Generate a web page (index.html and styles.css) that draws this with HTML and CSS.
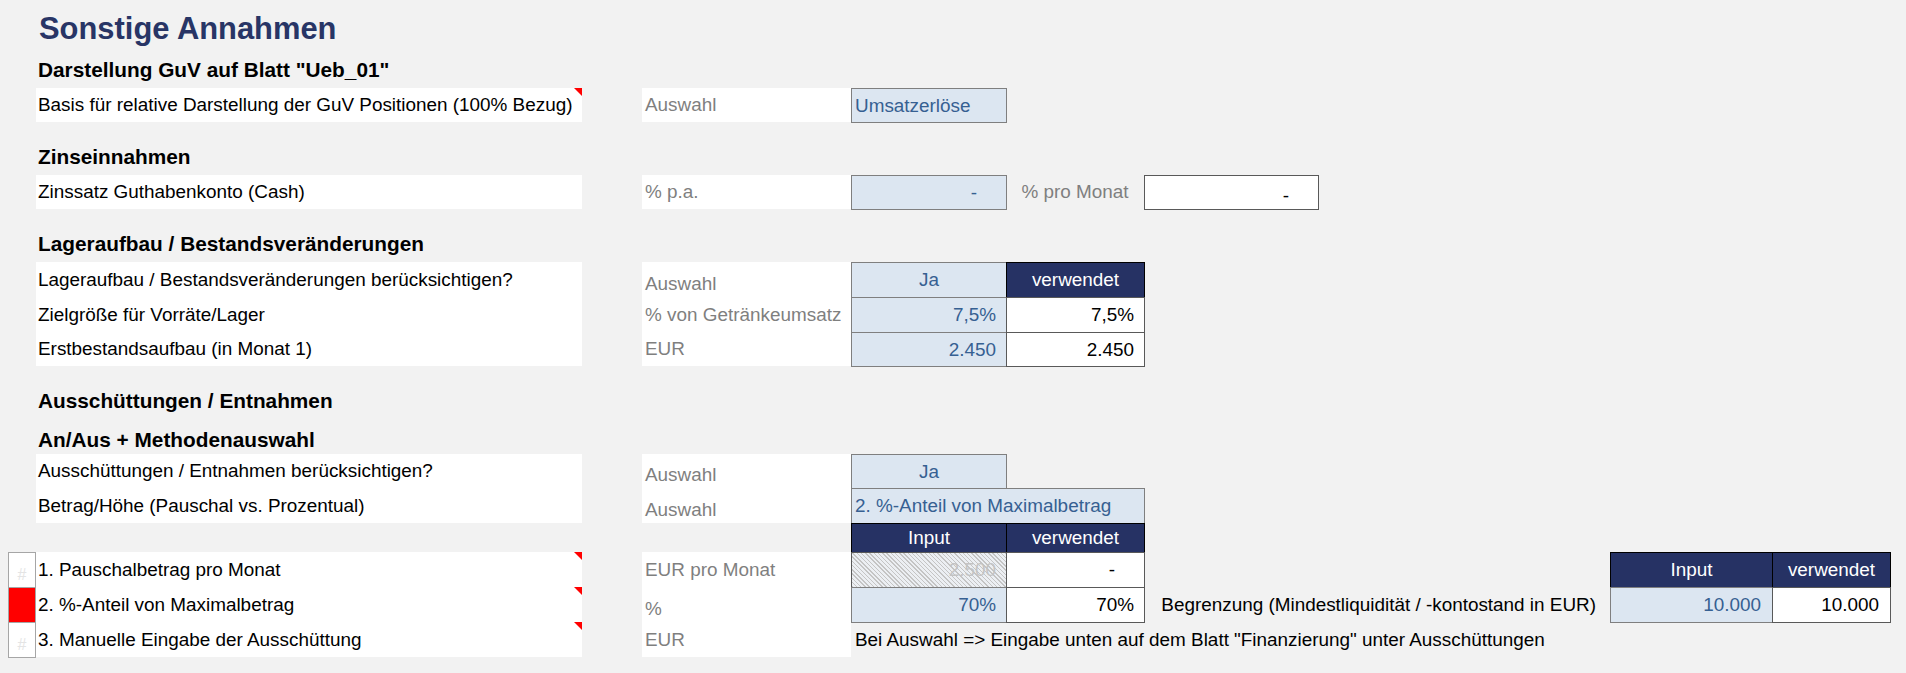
FILE: index.html
```html
<!DOCTYPE html>
<html lang="de">
<head>
<meta charset="utf-8">
<title>Sonstige Annahmen</title>
<link rel="stylesheet" href="styles.css">
</head>
<body>
<div class="sheet">
  <div class="row h53"><div class="sp-a"></div><div class="cell title">Sonstige Annahmen</div></div>
  <div class="row"><div class="sp-a"></div><div class="cell head">Darstellung GuV auf Blatt "Ueb_01"</div></div>
  <div class="row h34">
    <div class="sp-a"></div>
    <div class="cell c-b lbl note">Basis für relative Darstellung der GuV Positionen (100% Bezug)</div>
    <div class="c-c"></div>
    <div class="cell c-d unit">Auswahl</div>
    <div class="cell c-e bx inp">Umsatzerlöse</div>
  </div>
  <div class="row h18"></div>
  <div class="row"><div class="sp-a"></div><div class="cell head">Zinseinnahmen</div></div>
  <div class="row h34">
    <div class="sp-a"></div>
    <div class="cell c-b lbl">Zinssatz Guthabenkonto (Cash)</div>
    <div class="c-c"></div>
    <div class="cell c-d unit">% p.a.</div>
    <div class="cell c-e bx inp dash">-</div>
    <div class="cell c-f ctr muted">% pro Monat</div>
    <div class="cell c-g bx out dash bot">-</div>
  </div>
  <div class="row h18"></div>
  <div class="row"><div class="sp-a"></div><div class="cell head">Lageraufbau / Bestandsveränderungen</div></div>
  <div class="row">
    <div class="sp-a"></div>
    <div class="cell c-b lbl">Lageraufbau / Bestandsveränderungen berücksichtigen?</div>
    <div class="c-c"></div>
    <div class="cell c-d unit bot">Auswahl</div>
    <div class="cell c-e bx inp ctr">Ja</div>
    <div class="cell c-f bx hdr">verwendet</div>
  </div>
  <div class="row">
    <div class="sp-a"></div>
    <div class="cell c-b lbl">Zielgröße für Vorräte/Lager</div>
    <div class="c-c"></div>
    <div class="cell c-d unit">% von Getränkeumsatz</div>
    <div class="cell c-e bx inp num">7,5%</div>
    <div class="cell c-f bx out num">7,5%</div>
  </div>
  <div class="row h34">
    <div class="sp-a"></div>
    <div class="cell c-b lbl">Erstbestandsaufbau (in Monat 1)</div>
    <div class="c-c"></div>
    <div class="cell c-d unit">EUR</div>
    <div class="cell c-e bx inp num">2.450</div>
    <div class="cell c-f bx out num">2.450</div>
  </div>
  <div class="row h18"></div>
  <div class="row"><div class="sp-a"></div><div class="cell head">Ausschüttungen / Entnahmen</div></div>
  <div class="row"><div class="sp-a"></div><div class="cell head tight">An/Aus + Methodenauswahl</div></div>
  <div class="row h34">
    <div class="sp-a"></div>
    <div class="cell c-b lbl">Ausschüttungen / Entnahmen berücksichtigen?</div>
    <div class="c-c"></div>
    <div class="cell c-d unit bot">Auswahl</div>
    <div class="cell c-e bx inp ctr">Ja</div>
  </div>
  <div class="row">
    <div class="sp-a"></div>
    <div class="cell c-b lbl">Betrag/Höhe (Pauschal vs. Prozentual)</div>
    <div class="c-c"></div>
    <div class="cell c-d unit bot">Auswahl</div>
    <div class="cell c-ef bx inp">2. %-Anteil von Maximalbetrag</div>
  </div>
  <div class="row h29">
    <div class="sp-lead"></div>
    <div class="cell c-e bx hdr">Input</div>
    <div class="cell c-f bx hdr">verwendet</div>
  </div>
  <div class="row">
    <div class="sp-m"></div>
    <div class="cell chk">#</div>
    <div class="cell c-b lbl note">1. Pauschalbetrag pro Monat</div>
    <div class="c-c"></div>
    <div class="cell c-d unit">EUR pro Monat</div>
    <div class="cell c-e bx hatch num">2.500</div>
    <div class="cell c-f bx out dash">-</div>
    <div class="c-gh"></div>
    <div class="cell c-i bx hdr">Input</div>
    <div class="cell c-j bx hdr">verwendet</div>
  </div>
  <div class="row">
    <div class="sp-m"></div>
    <div class="cell chk on"></div>
    <div class="cell c-b lbl note">2. %-Anteil von Maximalbetrag</div>
    <div class="c-c"></div>
    <div class="cell c-d unit bot">%</div>
    <div class="cell c-e bx inp num">70%</div>
    <div class="cell c-f bx out num">70%</div>
    <div class="cell c-gh limit">Begrenzung (Mindestliquidität / -kontostand in EUR)</div>
    <div class="cell c-i bx inp num wide">10.000</div>
    <div class="cell c-j bx out num wide">10.000</div>
  </div>
  <div class="row">
    <div class="sp-m"></div>
    <div class="cell chk">#</div>
    <div class="cell c-b lbl note">3. Manuelle Eingabe der Ausschüttung</div>
    <div class="c-c"></div>
    <div class="cell c-d unit">EUR</div>
    <div class="cell hint">Bei Auswahl =&gt; Eingabe unten auf dem Blatt "Finanzierung" unter Ausschüttungen</div>
  </div>
</div>
</body>
</html>
```
FILE: styles.css
```css
body {
  margin: 0;
  background: #f2f2f2;
  font-family: "Liberation Sans", Arial, sans-serif;
  font-size: 18.9px;
  color: #000;
}

.sheet {
  width: 1906px;
  height: 673px;
  overflow: hidden;
}

.row {
  display: flex;
  height: 35px;
}
.h53 { height: 53px; }
.h34 { height: 34px; }
.h29 { height: 29px; }
.h18 { height: 18px; }

.sp-a { flex: none; width: 36px; }
.sp-m { flex: none; width: 8px; }
.sp-lead { flex: none; width: 851px; }

.cell {
  flex: none;
  display: flex;
  align-items: center;
  box-sizing: border-box;
  white-space: nowrap;
  position: relative;
}

.c-b { --w: 546px; width: var(--w); }
.c-c { flex: none; width: 60px; }
.c-d { --w: 209px; width: var(--w); }
.c-e { --w: 155px; width: var(--w); }
.c-f { --w: 138px; width: var(--w); }
.c-g { --w: 174px; width: var(--w); }
.c-gh { flex: none; width: 466px; }
.c-i { --w: 162px; width: var(--w); }
.c-j { --w: 118px; width: var(--w); }
.c-ef { --w: 293px; width: var(--w); }

/* bordered cells share their grid lines with neighbours */
.bx {
  width: calc(var(--w) + 1px);
  height: calc(100% + 1px);
  margin-right: -1px;
}

.title {
  font-size: 30.9px;
  font-weight: bold;
  color: #283566;
  align-items: flex-end;
  padding: 0 0 6px 3px;
}

.head {
  font-size: 20.8px;
  font-weight: bold;
  align-items: flex-end;
  padding: 0 0 6px 2px;
}
.head.tight { padding-bottom: 2px; }

.lbl {
  background: #fff;
  padding-left: 2px;
}

.unit {
  background: #fff;
  color: #7f7f7f;
  padding-left: 3px;
}

.muted { color: #7f7f7f; }

.bot {
  align-items: flex-end;
  padding-bottom: 2px;
}

.inp {
  background: #dce6f1;
  color: #366092;
  border: 1px solid #7f7f7f;
  padding-left: 3px;
}

.out {
  background: #fff;
  border: 1px solid #595959;
}

.hdr {
  background: #263264;
  color: #fff;
  border: 1px solid #000;
  justify-content: center;
}

.hatch {
  background: repeating-linear-gradient(45deg, #c4c4c4 0 1px, #eceff3 1px 3px);
  color: #c3c3c3;
  border: 1px solid #595959;
}

.ctr { justify-content: center; padding-left: 0; }
.num { justify-content: flex-end; padding-right: 10px; }
.num.wide { padding-right: 11px; }
.dash { justify-content: flex-end; padding-right: 29px; }

.note::after {
  content: "";
  position: absolute;
  top: 0;
  right: 0;
  width: 0;
  height: 0;
  border-style: solid;
  border-width: 0 8px 8px 0;
  border-color: transparent #f00 transparent transparent;
}

.chk {
  width: 28px;
  height: calc(100% + 1px);
  margin-bottom: -1px;
  background: #fff;
  border: 1px solid #a6a6a6;
  color: #e4e4e4;
  font-size: 16px;
  justify-content: center;
  align-items: flex-end;
  padding-bottom: 3px;
}
.chk.on { background: #f00; }

.limit {
  justify-content: flex-end;
  padding-right: 14px;
}

.hint {
  padding-left: 4px;
}
```
